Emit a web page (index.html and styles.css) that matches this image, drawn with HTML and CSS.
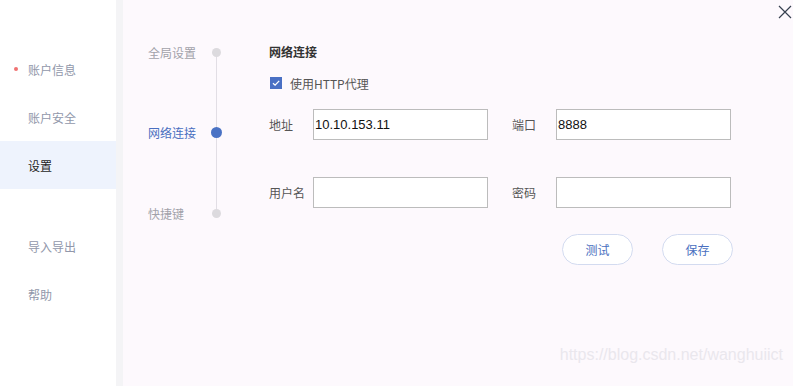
FILE: index.html
```html
<!DOCTYPE html>
<html lang="zh">
<head>
<meta charset="utf-8">
<title>设置</title>
<link rel="stylesheet" href="styles.css">
</head>
<body>
<div class="app">
  <nav class="sidebar">
    <div class="nav-item"><span class="badge"></span>账户信息</div>
    <div class="nav-item">账户安全</div>
    <div class="nav-item active">设置</div>
    <div class="nav-item spaced">导入导出</div>
    <div class="nav-item">帮助</div>
  </nav>
  <div class="divider"></div>
  <main class="main">
    <ul class="steps">
      <li class="step"><span class="step-label">全局设置</span><span class="step-dot"><i></i></span></li>
      <li class="step current"><span class="step-label">网络连接</span><span class="step-dot"><i></i></span></li>
      <li class="step"><span class="step-label">快捷键</span><span class="step-dot"><i></i></span></li>
    </ul>
    <section class="content">
      <h2 class="title">网络连接</h2>
      <label class="check-row">
        <span class="checkbox"><svg width="12" height="12" viewBox="0 0 12 12"><path d="M3 6.2 L5.1 8.2 L9.2 3.9" fill="none" stroke="#fff" stroke-width="1.3"/></svg></span>
        <span>使用HTTP代理</span>
      </label>
      <div class="form">
        <span class="lbl">地址</span>
        <div class="input">10.10.153.11</div>
        <span class="lbl second">端口</span>
        <div class="input">8888</div>
        <span class="lbl">用户名</span>
        <div class="input"></div>
        <span class="lbl second">密码</span>
        <div class="input"></div>
      </div>
      <div class="actions">
        <button class="btn">测试</button>
        <button class="btn">保存</button>
      </div>
    </section>
    <button class="close" aria-label="关闭"><svg width="14" height="14" viewBox="0 0 14 14"><path d="M1 1 L13 13 M13 1 L1 13" stroke="#36404f" stroke-width="1.2" fill="none"/></svg></button>
    <div class="watermark">https://blog.csdn.net/wanghuiict</div>
  </main>
</div>
</body>
</html>
```
FILE: styles.css
```css
html, body {
  margin: 0;
  padding: 0;
}
body {
  width: 793px;
  height: 386px;
  overflow: hidden;
  font-family: "Noto Sans CJK SC", "Liberation Sans", sans-serif;
  font-size: 12px;
}
.app {
  display: flex;
  height: 386px;
}
.sidebar {
  width: 116px;
  background: #ffffff;
  padding-top: 45px;
  box-sizing: border-box;
  display: flex;
  flex-direction: column;
}
.nav-item {
  position: relative;
  height: 48px;
  display: flex;
  align-items: center;
  padding-left: 28px;
  color: #9197aa;
  font-size: 12px;
}
.nav-item.active {
  background: #eef3fd;
  color: #1e1e1e;
}
.nav-item.spaced {
  margin-top: 33px;
}
.badge {
  position: absolute;
  left: 14px;
  top: 22px;
  width: 4px;
  height: 4px;
  border-radius: 50%;
  background: #f07272;
}
.divider {
  width: 7px;
  background: #f4f4f6;
}
.main {
  position: relative;
  flex: 1;
  background: #fdf9fd;
  display: flex;
}
.steps {
  list-style: none;
  margin: 0;
  padding: 42px 0 0 25px;
  position: relative;
  display: flex;
  flex-direction: column;
  gap: 60.5px;
}
.steps::before {
  content: "";
  position: absolute;
  left: 93px;
  top: 52px;
  width: 1px;
  height: 161px;
  background: #e2dee5;
}
.step {
  height: 20px;
  display: flex;
  align-items: center;
  gap: 10px;
}
.step-label {
  width: 48px;
  white-space: nowrap;
  color: #a2a2aa;
}
.step-dot {
  position: relative;
  z-index: 1;
  width: 21px;
  height: 20px;
  display: flex;
  align-items: center;
  justify-content: center;
}
.step-dot i {
  display: block;
  width: 9px;
  height: 9px;
  border-radius: 50%;
  background: #dcdade;
}
.step.current .step-label {
  color: #4a6fc0;
}
.step.current .step-dot i {
  width: 11px;
  height: 11px;
  background: #4a72c4;
}
.content {
  margin-left: 42px;
  padding-top: 44px;
  width: 464px;
}
.title {
  margin: 0;
  font-size: 12px;
  line-height: 16px;
  font-weight: bold;
  color: #333;
}
.check-row {
  margin-top: 15px;
  height: 16px;
  display: flex;
  align-items: center;
  gap: 8px;
  color: #555;
  padding-left: 1px;
}
.checkbox {
  width: 12px;
  height: 12px;
  background: #4a70c4;
  display: flex;
}
.form {
  margin-top: 18px;
  display: grid;
  grid-template-columns: 44px 175px 68px 175px;
  row-gap: 37px;
  width: 462px;
}
.lbl {
  display: flex;
  align-items: center;
  color: #555;
}
.lbl.second {
  padding-left: 24px;
}
.input {
  height: 31px;
  box-sizing: border-box;
  border: 1px solid #bcbcbc;
  background: #fff;
  font-family: "Liberation Sans", Arial, sans-serif;
  font-size: 13px;
  color: #111;
  display: flex;
  align-items: center;
  padding-left: 1px;
}
.actions {
  margin-top: 26px;
  display: flex;
  justify-content: flex-end;
  gap: 29px;
}
.btn {
  width: 71px;
  height: 31px;
  border: 1px solid #d3dbf0;
  border-radius: 16px;
  background: #fff;
  color: #4a6fc0;
  font-family: "Noto Sans CJK SC", sans-serif;
  font-size: 12px;
  padding: 0;
}
.close {
  position: absolute;
  right: 1px;
  top: 5px;
  width: 14px;
  height: 14px;
  padding: 0;
  border: 0;
  background: transparent;
  display: flex;
}
.watermark {
  position: absolute;
  right: 10px;
  bottom: 21px;
  font-family: "Liberation Sans", Arial, sans-serif;
  font-size: 16px;
  line-height: 20px;
  color: #eae7ed;
}
```
